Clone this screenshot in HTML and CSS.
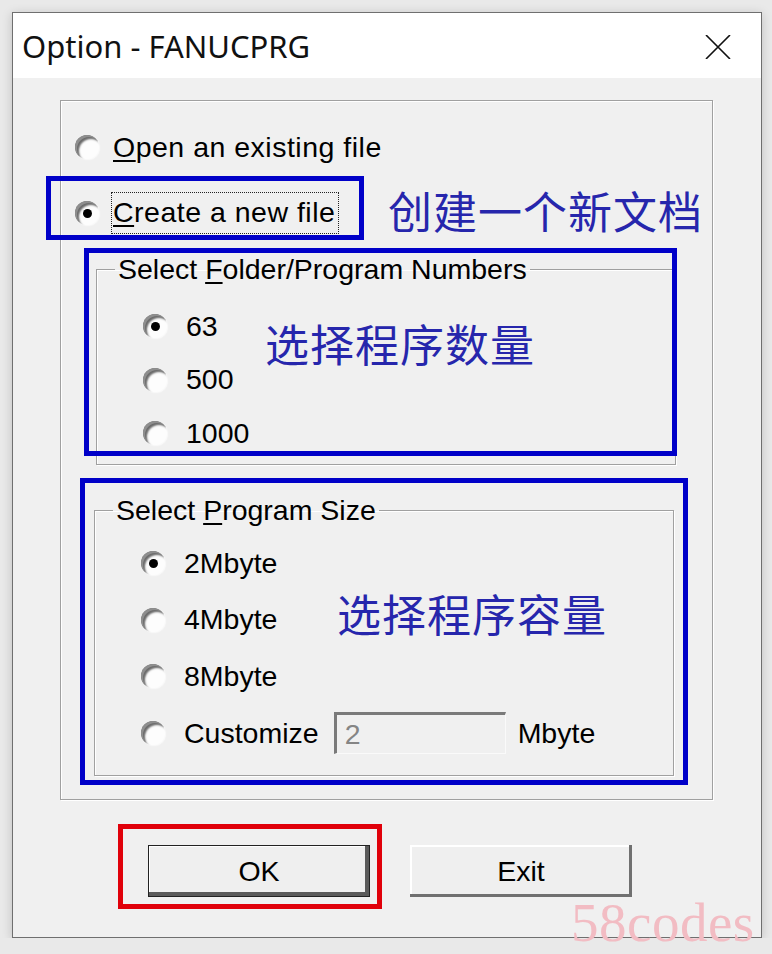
FILE: index.html
```html
<!DOCTYPE html>
<html>

<head>
  <meta charset="utf-8">
  <title>Option - FANUCPRG</title>
  <link rel="stylesheet" href="styles.css">
</head>

<body>
  <div class="window">
    <div class="titlebar">
      <span class="title">Option - FANUCPRG</span>
      <svg class="close" width="26" height="24" viewBox="0 0 26 24">
        <path d="M1 0L25 24M25 0L1 24" stroke="#111" stroke-width="1.6" fill="none" />
      </svg>
    </div>

    <div class="content">
      <div class="frame">
        <div class="row top-row">
          <span class="radio"></span>
          <span class="wide"><u>O</u>pen an existing file</span>
        </div>
        <div class="row top-row second">
          <span class="radio checked"></span>
          <span class="focus wide"><u>C</u>reate a new file</span>
        </div>

        <fieldset class="group group-num">
          <legend>Select <u>F</u>older/Program Numbers</legend>
          <div class="row"><span class="radio checked"></span>63</div>
          <div class="row"><span class="radio"></span>500</div>
          <div class="row"><span class="radio"></span>1000</div>
        </fieldset>

        <fieldset class="group group-size">
          <legend>Select <u>P</u>rogram Size</legend>
          <div class="row"><span class="radio checked"></span>2Mbyte</div>
          <div class="row"><span class="radio"></span>4Mbyte</div>
          <div class="row"><span class="radio"></span>8Mbyte</div>
          <div class="row">
            <span class="radio"></span>Customize
            <span class="field">2</span>
            <span class="unit">Mbyte</span>
          </div>
        </fieldset>

        <!-- annotations drawn over the dialog -->
        <div class="mark mark-create"></div>
        <div class="note note-create">创建一个新文档</div>
        <div class="mark mark-num"></div>
        <div class="note note-num">选择程序数量</div>
        <div class="mark mark-size"></div>
        <div class="note note-size">选择程序容量</div>
      </div>

      <div class="buttons">
        <div class="red-mark">
          <button class="btn default">OK</button>
        </div>
        <button class="btn">Exit</button>
      </div>
    </div>
  </div>

  <div class="watermark">58codes</div>
</body>

</html>
```

FILE: styles.css
```css
body {
  margin: 0px;
  padding: 0px;
  background-color: #e9e9e9;
  font-family: "Liberation Sans", Arial, sans-serif;
  overflow: hidden;
}

.window {
  margin: 12px 0 0 12px;
  width: 750px;
  height: 926px;
  box-sizing: border-box;
  border: 1px solid #6f6f6f;
  background-color: #f0f0f0;
  box-shadow: 0 2px 10px rgba(0, 0, 0, 0.18);
}

.titlebar {
  height: 65px;
  background-color: #ffffff;
  display: flex;
  align-items: center;
  justify-content: space-between;
  padding: 0 30px 0 9px;
}

.title {
  font-family: "Noto Sans", "Open Sans", sans-serif;
  font-size: 31px;
  color: #111;
}

.close {
  display: block;
  margin-top: 2px;
}

.content {
  padding: 22px 48px 0 47px;
  font-size: 28.5px;
  color: #000;
}

u {
  text-decoration-thickness: 2px;
  text-underline-offset: 3px;
}

.frame {
  position: relative;
  border: 1px solid #a0a0a0;
  box-shadow: 1px 1px 0 #fff, inset 1px 1px 0 #fff;
  padding: 26px 0 23px 0;
}

.row {
  display: flex;
  align-items: center;
  height: 40px;
  gap: 19px;
}

.top-row {
  padding-left: 14px;
  gap: 14px;
}

.top-row.second {
  margin-top: 26px;
}

.wide {
  letter-spacing: 0.5px;
}

.focus {
  outline: 1.5px dotted #222;
  outline-offset: 0;
  padding: 3px 3px 4px 1px;
  margin-left: -1px;
}

/* radio buttons, classic sunken look */
.radio {
  position: relative;
  flex: none;
  width: 24px;
  height: 24px;
  border-radius: 50%;
  background-color: #fdfdfd;
  box-shadow: inset 2px 2px 0 #8e8e8e, inset 4px 4px 2px #6a6a6a, 1px 1px 1px #fafafa;
}

.radio.checked::after {
  content: "";
  position: absolute;
  left: 8px;
  top: 8px;
  width: 9px;
  height: 9px;
  border-radius: 50%;
  background-color: #000;
}

.group {
  border: 1px solid #a0a0a0;
  box-shadow: 1px 1px 0 #fff, inset 1px 1px 0 #fff;
  padding: 20px 0 11px 0;
  margin: 19px 36px 0 35px;
  display: flex;
  flex-direction: column;
  gap: 13.5px;
  min-width: 0;
}

.group legend {
  margin-left: 18px;
  padding: 0 3px;
  line-height: 34px;
}

.group .row {
  padding-left: 46px;
}

.group-size {
  margin: 28px 38px 0 33px;
  padding: 16px 0 22px 0;
  gap: 16.7px;
}

.field {
  width: 172px;
  height: 42px;
  box-sizing: border-box;
  margin-left: -4px;
  padding-left: 8px;
  border-top: 3px solid #7a7a7a;
  border-left: 3px solid #7a7a7a;
  border-right: 1px solid #fafafa;
  border-bottom: 1px solid #fafafa;
  color: #858585;
  line-height: 38px;
}

.unit {
  margin-left: -7px;
}

.mark {
  position: absolute;
  border: 5px solid #0000c8;
  box-sizing: border-box;
}

.mark-create {
  left: -15px;
  top: 75px;
  width: 318px;
  height: 64px;
}

.mark-num {
  left: 23px;
  top: 147px;
  width: 593px;
  height: 208px;
}

.mark-size {
  left: 19px;
  top: 377px;
  width: 608px;
  height: 307px;
}

.note {
  position: absolute;
  font-family: "Noto Sans CJK SC", sans-serif;
  font-size: 44px;
  line-height: 1;
  letter-spacing: 1px;
  color: #2626ac;
}

.note-create {
  left: 327px;
  top: 87px;
}

.note-num {
  left: 204px;
  top: 220px;
}

.note-size {
  left: 276px;
  top: 490px;
}

.buttons {
  display: flex;
  align-items: flex-start;
  margin: 24px 0 0 58px;
  gap: 28px;
}

.red-mark {
  border: 5px solid #e0000a;
  padding: 16px 7px 7px 25px;
}

.btn {
  display: block;
  width: 222px;
  height: 52px;
  font-family: "Liberation Sans", Arial, sans-serif;
  font-size: 28.5px;
  color: #000;
  background-color: #efefef;
  border: none;
  padding: 0;
  box-shadow: inset -3px -3px 0 #707070, inset 2px 2px 0 #ffffff;
}

.buttons > .btn {
  margin-top: 21px;
}

.btn.default {
  border: 1px solid #222;
  box-shadow: inset -4px -4px 0 #5a5a5a, inset 1px 1px 0 #ffffff;
}

.watermark {
  position: absolute;
  left: 571px;
  top: 895px;
  font-family: "Liberation Serif", serif;
  font-size: 55px;
  line-height: 1;
  letter-spacing: 0.5px;
  color: #f2bcc3;
}
```
